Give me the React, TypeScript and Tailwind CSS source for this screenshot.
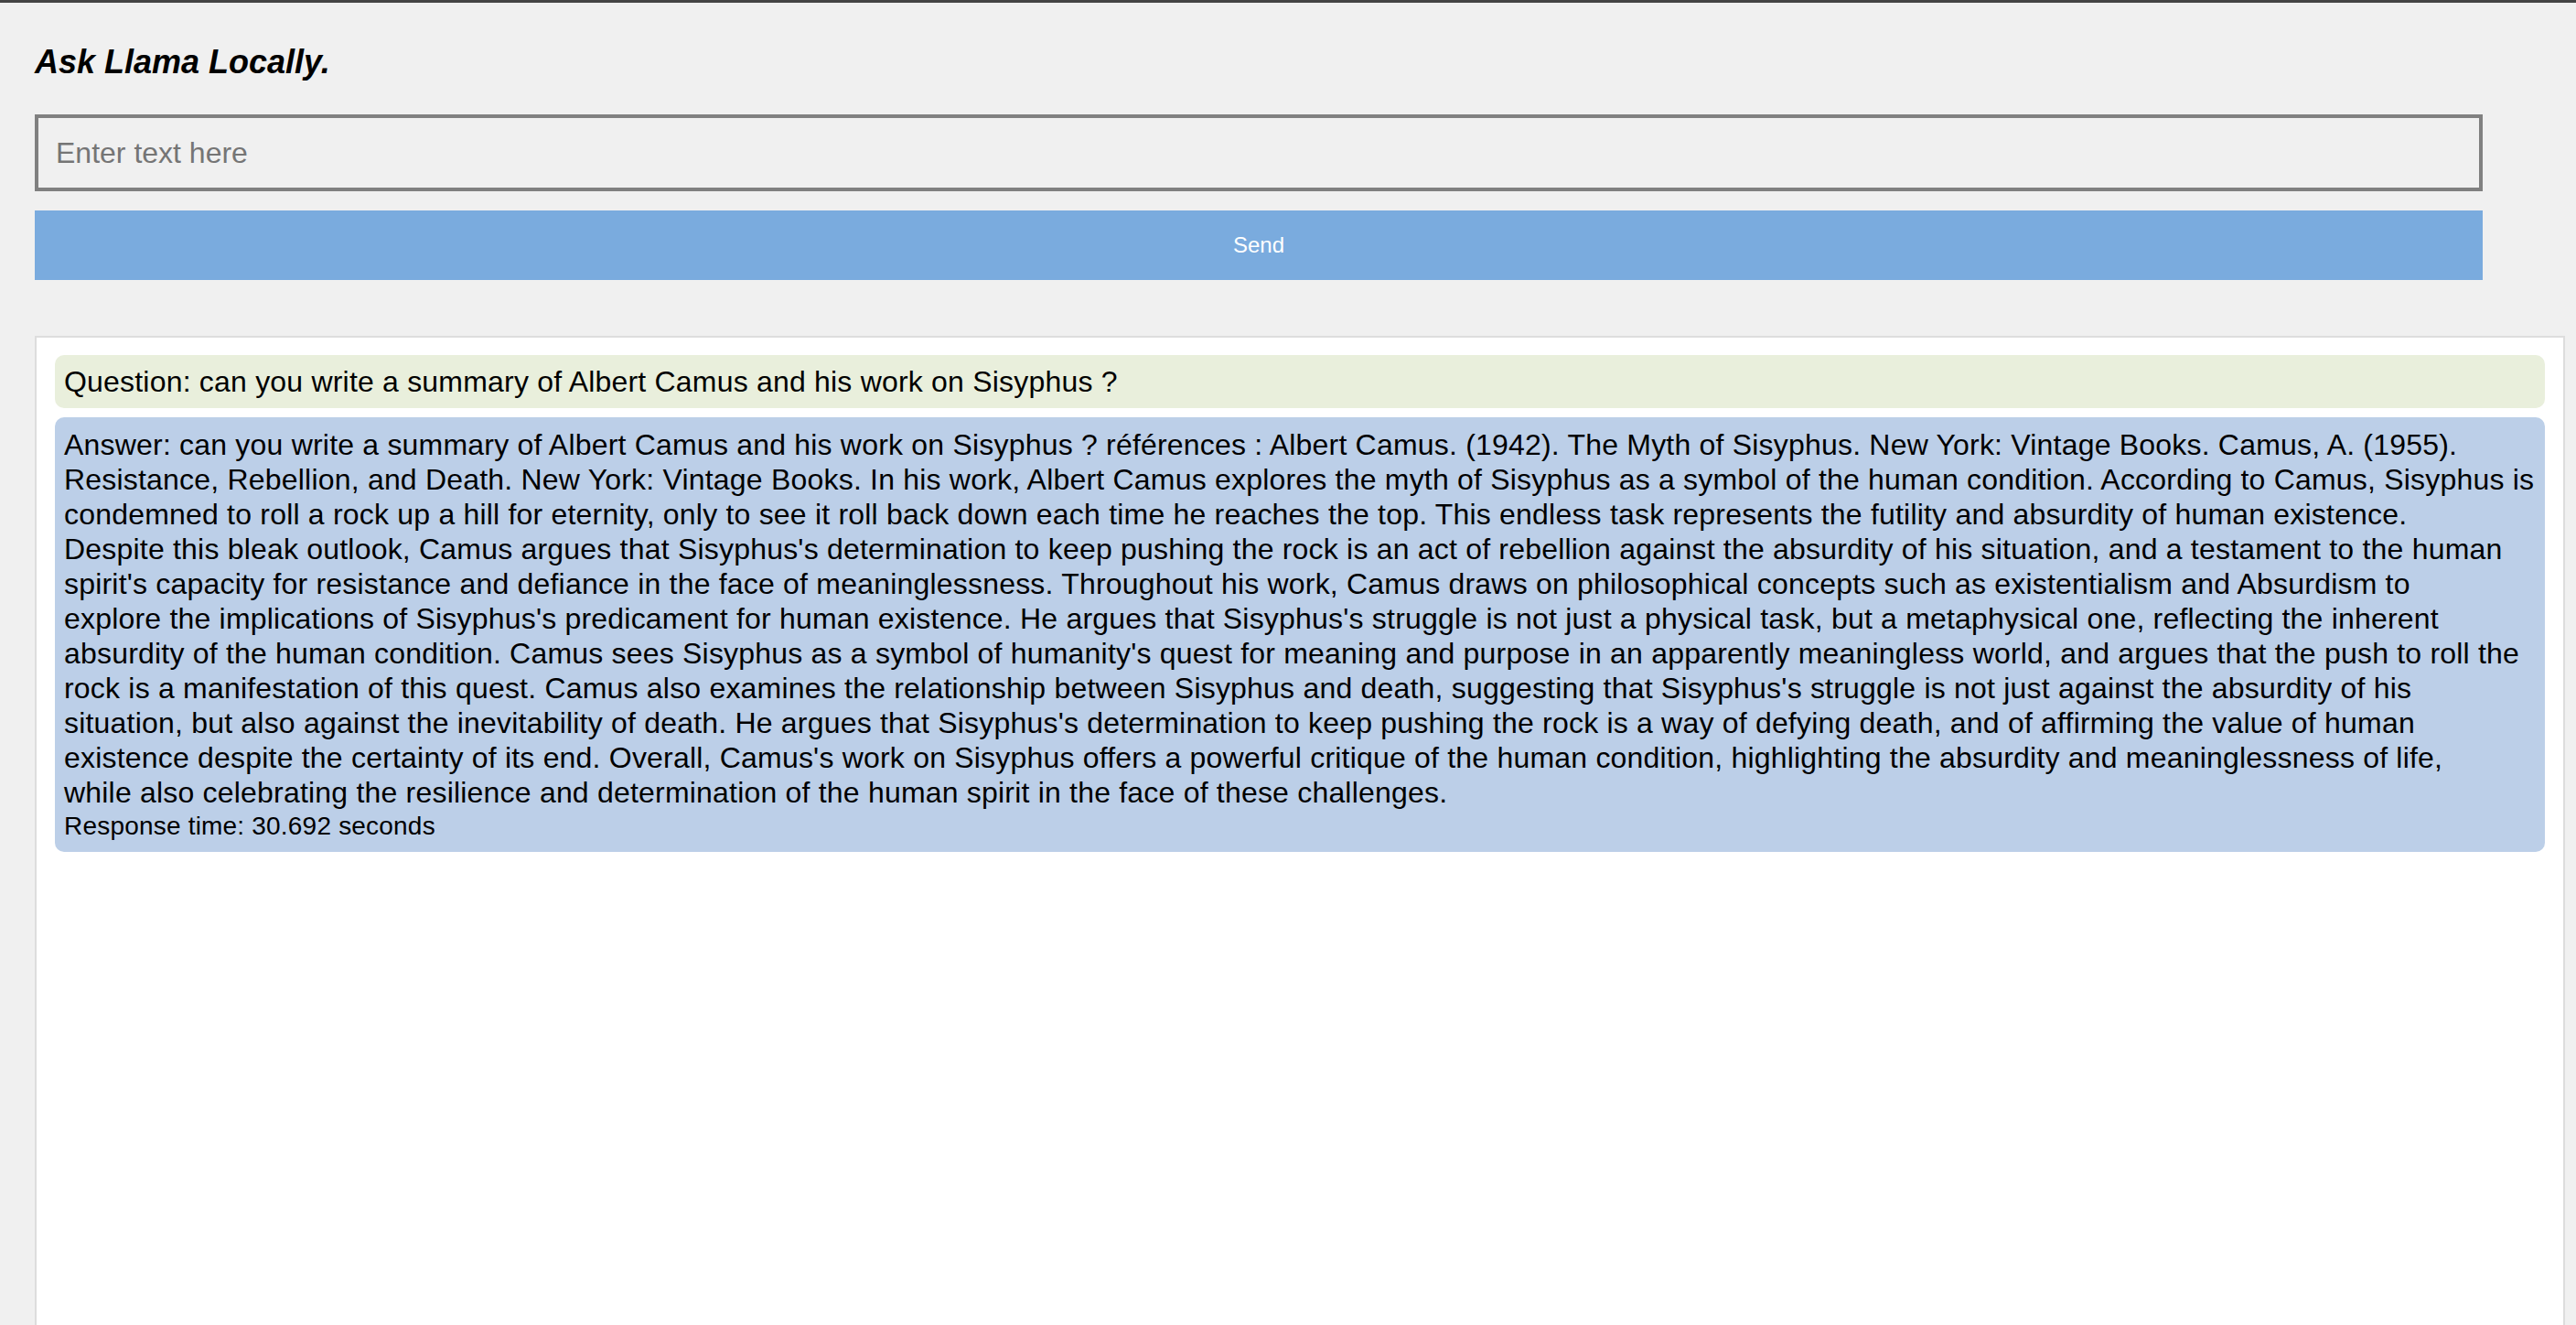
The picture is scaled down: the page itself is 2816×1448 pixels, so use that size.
import React, { useState } from "react";

const QUESTION = "can you write a summary of Albert Camus and his work on Sisyphus ?";

// answer kept in the lines it wraps to in the original window
const ANSWER_LINES = [
  "Answer: can you write a summary of Albert Camus and his work on Sisyphus ? références : Albert Camus. (1942). The Myth of Sisyphus. New York: Vintage Books. Camus, A. (1955).",
  "Resistance, Rebellion, and Death. New York: Vintage Books. In his work, Albert Camus explores the myth of Sisyphus as a symbol of the human condition. According to Camus, Sisyphus is",
  "condemned to roll a rock up a hill for eternity, only to see it roll back down each time he reaches the top. This endless task represents the futility and absurdity of human existence.",
  "Despite this bleak outlook, Camus argues that Sisyphus's determination to keep pushing the rock is an act of rebellion against the absurdity of his situation, and a testament to the human",
  "spirit's capacity for resistance and defiance in the face of meaninglessness. Throughout his work, Camus draws on philosophical concepts such as existentialism and Absurdism to",
  "explore the implications of Sisyphus's predicament for human existence. He argues that Sisyphus's struggle is not just a physical task, but a metaphysical one, reflecting the inherent",
  "absurdity of the human condition. Camus sees Sisyphus as a symbol of humanity's quest for meaning and purpose in an apparently meaningless world, and argues that the push to roll the",
  "rock is a manifestation of this quest. Camus also examines the relationship between Sisyphus and death, suggesting that Sisyphus's struggle is not just against the absurdity of his",
  "situation, but also against the inevitability of death. He argues that Sisyphus's determination to keep pushing the rock is a way of defying death, and of affirming the value of human",
  "existence despite the certainty of its end. Overall, Camus's work on Sisyphus offers a powerful critique of the human condition, highlighting the absurdity and meaninglessness of life,",
  "while also celebrating the resilience and determination of the human spirit in the face of these challenges.",
];

export default function App() {
  const [text, setText] = useState("");

  return (
    <div className="h-screen overflow-hidden bg-[#f0f0f0] font-['Liberation_Sans',Arial,sans-serif] text-black">
      <div className="h-[3px] bg-[#444444]" />
      <div className="pl-[38px] pt-[44px]">
        <h1 className="text-[36px] leading-[42px] font-bold italic">Ask Llama Locally.</h1>

        <input
          className="mt-[36px] block h-[84px] w-[2676px] border-4 border-[#808080] bg-transparent pl-[19px] text-[32px] outline-none placeholder:text-[#757575]"
          placeholder="Enter text here"
          value={text}
          onChange={(e) => setText(e.target.value)}
        />
        <button className="mt-[21px] block h-[76px] w-[2676px] bg-[#7aabde] text-[24px] text-white">Send</button>

        {/* Chat log */}
        <div className="mt-[61px] h-[1200px] w-[2766px] border-2 border-[#dddddd] bg-white px-[20px] pt-[19px] flex flex-col gap-[10px]">
          <div className="rounded-[10px] bg-[#e9efdc] p-[10px] text-[32px] leading-[38px] tracking-[0.2px]">Question: {QUESTION}</div>
          <div className="rounded-[10px] bg-[#bccfe8] px-[10px] pt-[11px] pb-[10px]">
            <div className="text-[32px] leading-[38px] tracking-[0.2px]">
              {ANSWER_LINES.map((line, i) => (
                <span key={i} className="block whitespace-nowrap">{line}</span>
              ))}
            </div>
            <div className="text-[28px] leading-[36px] tracking-[0.2px]">Response time: 30.692 seconds</div>
          </div>
        </div>
      </div>
    </div>
  );
}
